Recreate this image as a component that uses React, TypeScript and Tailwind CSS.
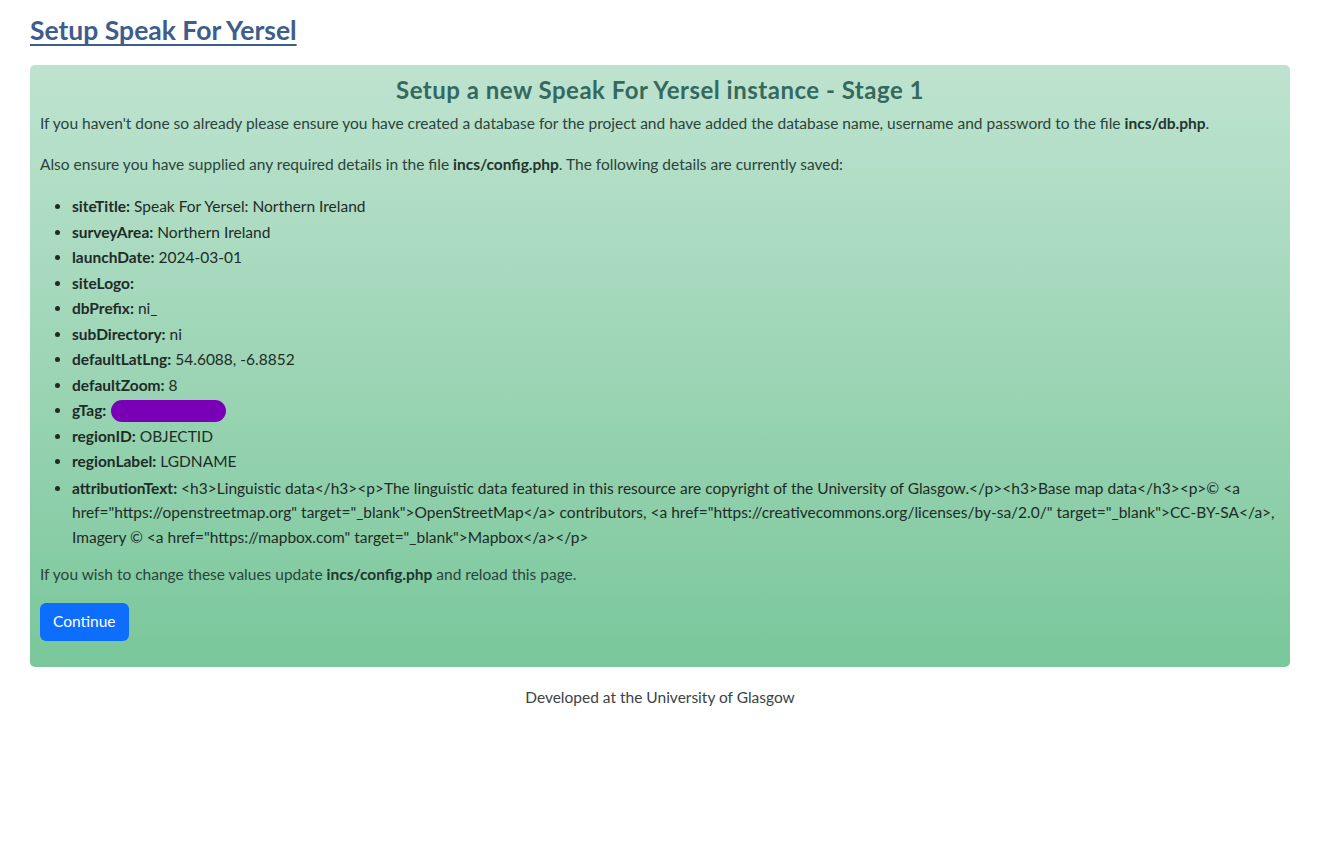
import React from 'react';

const settings: { key: string; value: React.ReactNode }[] = [
  { key: 'siteTitle', value: 'Speak For Yersel: Northern Ireland' },
  { key: 'surveyArea', value: 'Northern Ireland' },
  { key: 'launchDate', value: '2024-03-01' },
  { key: 'siteLogo', value: '' },
  { key: 'dbPrefix', value: 'ni_' },
  { key: 'subDirectory', value: 'ni' },
  { key: 'defaultLatLng', value: '54.6088, -6.8852' },
  { key: 'defaultZoom', value: '8' },
  {
    key: 'gTag',
    value: <span className="inline-block align-middle w-[115px] h-[22px] rounded-full bg-[#7a00b8] -mt-[3px] ml-[1px]" />,
  },
  { key: 'regionID', value: 'OBJECTID' },
  { key: 'regionLabel', value: 'LGDNAME' },
  {
    key: 'attributionText',
    value:
      '<h3>Linguistic data</h3><p>The linguistic data featured in this resource are copyright of the University of Glasgow.</p><h3>Base map data</h3><p>© <a href="https://openstreetmap.org" target="_blank">OpenStreetMap</a> contributors, <a href="https://creativecommons.org/licenses/by-sa/2.0/" target="_blank">CC-BY-SA</a>, Imagery © <a href="https://mapbox.com" target="_blank">Mapbox</a></p>',
  },
];

export default function App() {
  return (
    <div className="min-h-[868px] bg-white px-[30px] pt-[14px] font-['Lato',_sans-serif] text-[15.5px] leading-[25.5px] text-[#2c433b]">
      <h1 className="text-[26.5px] leading-[32px] font-bold text-[#3e5c8c] underline decoration-2 underline-offset-[4px] mb-[19px]">
        Setup Speak For Yersel
      </h1>

      <div className="rounded-[5px] bg-gradient-to-b from-[#bee3d0] to-[#79c79b] px-[10px] pt-[8px] pb-[26px]">
        <h2 className="text-center text-[24px] leading-[34px] font-bold tracking-[0.5px] text-[#35695d] mb-[4px]">
          Setup a new Speak For Yersel instance - Stage 1
        </h2>
        <p className="mb-[15px]">
          If you haven't done so already please ensure you have created a database for the project and have added the
          database name, username and password to the file <b className="text-[#22352e]">incs/db.php</b>.
        </p>
        <p className="mb-[17px]">
          Also ensure you have supplied any required details in the file <b className="text-[#22352e]">incs/config.php</b>. The following details
          are currently saved:
        </p>
        <ul className="list-disc pl-[32px] mb-[13px] text-[#1f2b27]">
          {settings.map(s => (
            <li key={s.key} className={s.key === 'attributionText' ? 'leading-[24.5px] pt-[1px]' : ''}>
              <b>{s.key}:</b> {s.value}
            </li>
          ))}
        </ul>
        <p className="mb-[15px]">
          If you wish to change these values update <b className="text-[#22352e]">incs/config.php</b> and reload this page.
        </p>
        <button className="h-[38px] px-[13px] rounded-[6px] bg-[#0d6efd] text-white text-[15.5px]">Continue</button>
      </div>

      <p className="text-center mt-[18px] text-[#3a4346]">Developed at the University of Glasgow</p>
    </div>
  );
}
